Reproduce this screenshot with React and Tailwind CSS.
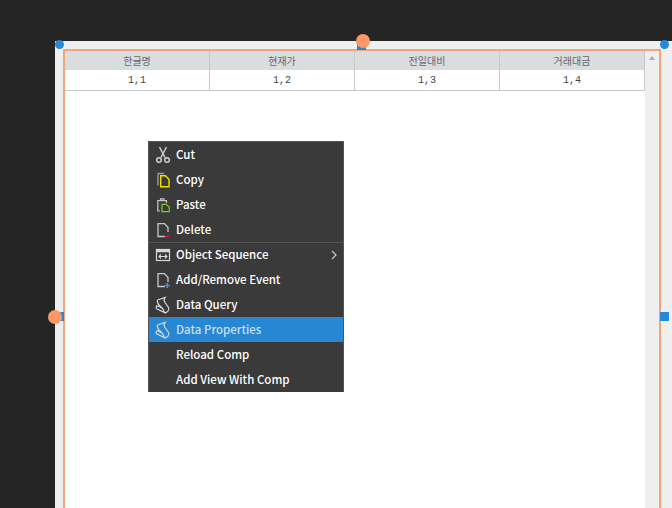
const cols = [
  ["한글명", "1,1"],
  ["현재가", "1,2"],
  ["전일대비", "1,3"],
  ["거래대금", "1,4"],
];

function Cut() {
  return (
    <svg width="16" height="18" viewBox="0 0 16 18" fill="none" stroke="#cfcfcf" strokeWidth="1.5">
      <path d="M4.5 1 L10 11.5 M11.5 1 L6 11.5" />
      <circle cx="4" cy="14" r="2.3" />
      <circle cx="12" cy="14" r="2.3" />
    </svg>
  );
}

function Doc({ mark }) {
  return (
    <svg width="16" height="18" viewBox="0 0 16 18" fill="none" strokeWidth="1.3">
      <path d="M10 15.5 H3 V2.6 H9.5 L13 6.5 V11" stroke="#c8c8c8" />
      {mark}
    </svg>
  );
}

function Copy() {
  return (
    <svg width="16" height="18" viewBox="0 0 16 18" fill="none" strokeWidth="1.4">
      <path d="M3 14.5 V2.5 H9" stroke="#9a9a9a" />
      <path d="M5.7 15.7 V4.8 H10.5 L14 8.5 V15.7 Z" stroke="#f2e000" />
    </svg>
  );
}

function Paste() {
  return (
    <svg width="16" height="18" viewBox="0 0 16 18" fill="none" strokeWidth="1.2">
      <path d="M5 15 H2.8 V4.6 H11.5 V7" stroke="#c8c8c8" />
      <path d="M5.5 4.4 V2.8 H9 V4.4" stroke="#c8c8c8" />
      <path d="M7 15.6 V8.4 H11 L14.2 11 V15.6 Z" stroke="#7ed321" />
    </svg>
  );
}

function Sequence() {
  return (
    <svg width="16" height="18" viewBox="0 0 16 18" fill="none" stroke="#d8d8d8">
      <rect x="1.5" y="3.5" width="13" height="11" strokeWidth="1.2" />
      <path d="M1.5 5 H14.5" strokeWidth="2.5" />
      <path d="M4 10.5 H12 M6 8.5 L4 10.5 L6 12.5 M10 8.5 L12 10.5 L10 12.5" strokeWidth="1.1" />
    </svg>
  );
}

function Scroll() {
  return (
    <svg width="18" height="18" viewBox="0 0 18 18" fill="none" stroke="#dcdcdc" strokeWidth="1.2">
      <path d="M3.5 4 L11 1.5 C9.5 3.5 10 5 11 6.5 L14.5 11.5 C16 14 13 17 10.5 16.5" />
      <path d="M3.5 4 C2.5 6 4 7.5 5 9 L8 12" />
      <path d="M8 12 L4 10 C2 9.5 1.5 12 3 13 L10.5 16.5 C9.5 15 9.5 13 8 12 Z" />
    </svg>
  );
}

const menu = [
  { label: "Cut", icon: <Cut /> },
  { label: "Copy", icon: <Copy /> },
  { label: "Paste", icon: <Paste /> },
  { label: "Delete", icon: <Doc mark={<path d="M9.5 15.6 H14" stroke="#e0183c" />} /> },
  { label: "Object Sequence", icon: <Sequence />, divider: true, arrow: true },
  { label: "Add/Remove Event", icon: <Doc mark={<path d="M12.3 12 V17 M9.8 14.5 H14.8" stroke="#2b9bea" strokeWidth="1.6" />} /> },
  { label: "Data Query", icon: <Scroll /> },
  { label: "Data Properties", icon: <Scroll />, active: true },
  { label: "Reload Comp" },
  { label: "Add View With Comp" },
];

function MenuItem({ item }) {
  return (
    <div
      className={`flex h-[25px] items-center ${item.divider ? "border-t border-[#555555]" : ""} ${
        item.active ? "bg-[#2887d2] text-[#c9dff2]" : "text-white"
      }`}
    >
      <span className="flex w-[27px] justify-center pl-[1px]">{item.icon}</span>
      <span className="flex-1 text-[11.5px] font-medium">{item.label}</span>
      {item.arrow && (
        <svg className="mr-[6px]" width="6" height="10" viewBox="0 0 6 10" fill="none" stroke="#c4c4c4" strokeWidth="1.2">
          <path d="M1 1 L5 5 L1 9" />
        </svg>
      )}
    </div>
  );
}

export default function App() {
  return (
    <div className="relative h-[508px] w-[672px] overflow-hidden bg-[#252525] pl-[55px] pt-[41px] font-['Noto_Sans_CJK_KR',sans-serif]">
      <div className="h-[467px] bg-[#efefef] pl-[8px] pr-[11px] pt-[8px]">
        <div className="flex h-[459px] border-2 border-b-0 border-[#f3a47c]">
          <div className="flex-1 bg-white">
            <div className="grid grid-cols-4 border-b border-[#c8c8c8]">
              {cols.map(([head, cell]) => (
                <div key={head} className="border-r border-[#c8c8c8]">
                  <div className="flex h-[19px] items-center justify-center bg-[#d9dde0] text-[10px] text-[#666666]">
                    {head}
                  </div>
                  <div className="flex h-[20px] items-center justify-center font-['Liberation_Mono',monospace] text-[10px] text-[#444444]">
                    {cell}
                  </div>
                </div>
              ))}
            </div>
          </div>
          <div className="flex w-[14px] justify-center pt-[5px]">
            <div className="h-0 w-0 border-x-[3px] border-b-[4px] border-x-transparent border-b-[#aaaaaa]" />
          </div>
        </div>
      </div>

      {/* context menu */}
      <div className="absolute left-[148px] top-[141px] w-[196px] border-x border-t border-[#555555] bg-[#3a3a3a]">
        {menu.map((item) => (
          <MenuItem key={item.label} item={item} />
        ))}
      </div>

      {/* resize handles */}
      <div className="absolute left-[55px] top-[40px] h-[9px] w-[9px] rounded-full bg-[#2589d8]" />
      <div className="absolute left-[660px] top-[40px] h-[9px] w-[9px] rounded-full bg-[#2589d8]" />
      <div className="absolute left-[357px] top-[41px] h-[9px] w-[9px] bg-[#2589d8]" />
      <div className="absolute left-[356px] top-[34px] h-[14px] w-[14px] rounded-full bg-[#ff9766]" />
      <div className="absolute left-[55px] top-[312px] h-[9px] w-[9px] bg-[#2589d8]" />
      <div className="absolute left-[48px] top-[310px] h-[14px] w-[14px] rounded-full bg-[#ff9766]" />
      <div className="absolute left-[660px] top-[312px] h-[9px] w-[9px] bg-[#2589d8]" />
    </div>
  );
}
